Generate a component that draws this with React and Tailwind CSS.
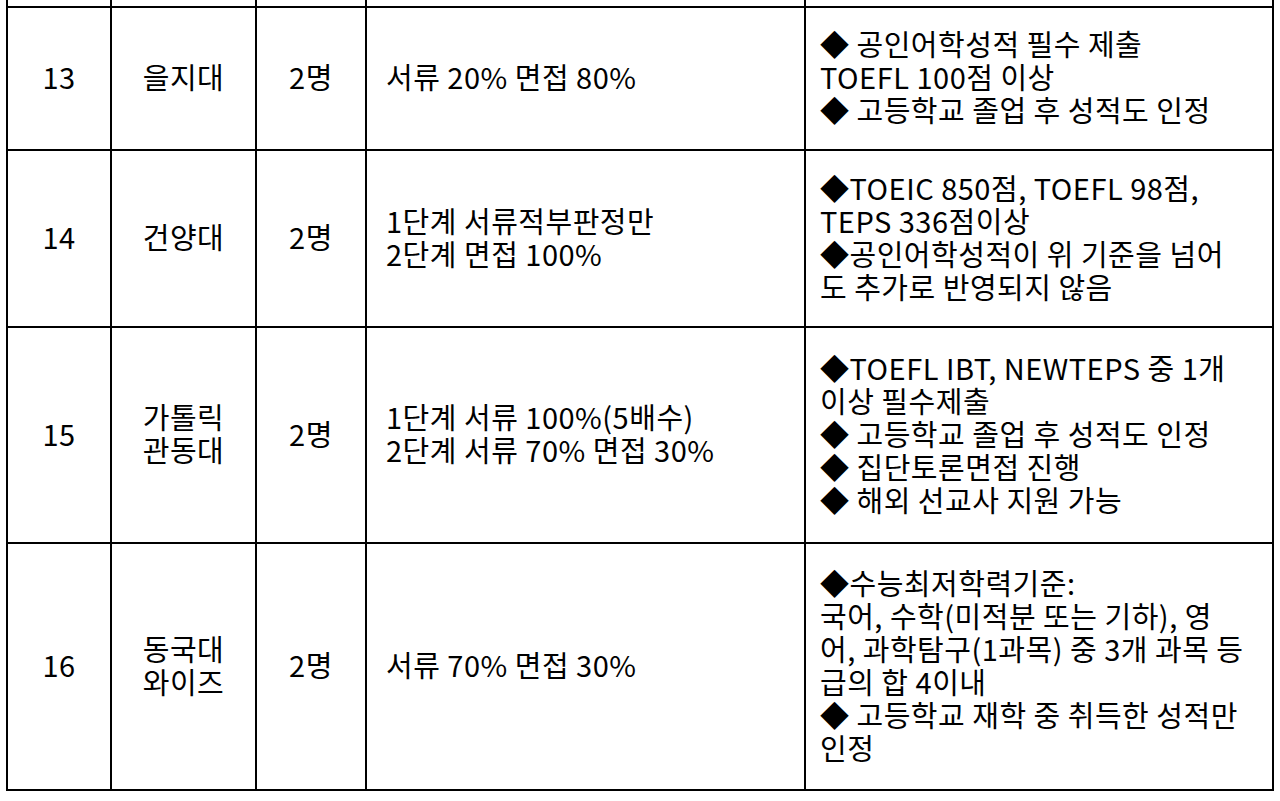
import React from 'react';

const rows = [
  {
    no: '13',
    name: ['을지대'],
    count: '2명',
    method: ['서류 20% 면접 80%'],
    notes: ['◆ 공인어학성적 필수 제출', 'TOEFL 100점 이상', '◆ 고등학교 졸업 후 성적도 인정'],
    h: 'h-[143px]',
  },
  {
    no: '14',
    name: ['건양대'],
    count: '2명',
    method: ['1단계 서류적부판정만', '2단계 면접 100%'],
    notes: ['◆TOEIC 850점, TOEFL 98점,', 'TEPS 336점이상', '◆공인어학성적이 위 기준을 넘어', '도 추가로 반영되지 않음'],
    h: 'h-[177px]',
  },
  {
    no: '15',
    name: ['가톨릭', '관동대'],
    count: '2명',
    method: ['1단계 서류 100%(5배수)', '2단계 서류 70% 면접 30%'],
    notes: ['◆TOEFL IBT, NEWTEPS 중 1개', '이상 필수제출', '◆ 고등학교 졸업 후 성적도 인정', '◆ 집단토론면접 진행', '◆ 해외 선교사 지원 가능'],
    h: 'h-[216px]',
  },
  {
    no: '16',
    name: ['동국대', '와이즈'],
    count: '2명',
    method: ['서류 70% 면접 30%'],
    notes: ['◆수능최저학력기준:', '국어, 수학(미적분 또는 기하), 영', '어, 과학탐구(1과목) 중 3개 과목 등', '급의 합 4이내', '◆ 고등학교 재학 중 취득한 성적만', '인정'],
    h: 'h-[247px]',
  },
];

const Lines = ({ items }) => items.map((t, i) => (
  <div key={i} className="whitespace-nowrap">{t}</div>
));

export default function App() {
  const cell = 'border-2 border-black align-middle pb-[4px]';
  return (
    <div className="w-[1280px] h-[801px] bg-white overflow-hidden font-['Noto_Sans_CJK_KR',sans-serif] text-[29px] leading-[33px] tracking-[0.5px] text-black">
      <table className="ml-[6px] w-[1266px] table-fixed border-collapse">
        <colgroup>
          <col className="w-[104px]" />
          <col className="w-[145px]" />
          <col className="w-[110px]" />
          <col className="w-[439px]" />
          <col className="w-[468px]" />
        </colgroup>
        <tbody>
          {/* tail of the row above, cut off by the window */}
          <tr className="h-[7px]">
            {[0, 1, 2, 3, 4].map((i) => (
              <td key={i} className="border-x-2 border-b-2 border-black p-0" />
            ))}
          </tr>
          {rows.map((r) => (
            <tr key={r.no} className={r.h}>
              <td className={`${cell} text-center`}>{r.no}</td>
              <td className={`${cell} text-center`}><Lines items={r.name} /></td>
              <td className={`${cell} text-center`}>{r.count}</td>
              <td className={`${cell} pl-[19px]`}><Lines items={r.method} /></td>
              <td className={`${cell} pl-[14px]`}><Lines items={r.notes} /></td>
            </tr>
          ))}
        </tbody>
      </table>
    </div>
  );
}
